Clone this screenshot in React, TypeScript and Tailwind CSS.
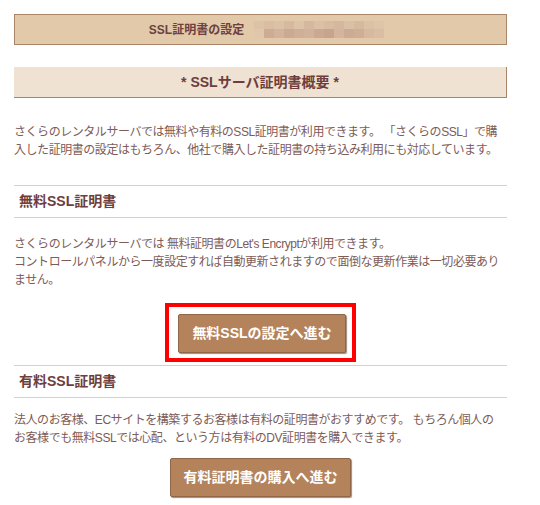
import { FC } from "react";

const blurTop = [
  "#dcc3a8", "#d9bea3", "#dbc1a6", "#d6b9a0", "#ddc4a9", "#d5b89f", "#dbc0a5",
  "#d8bca2", "#d4b79e", "#dac0a5", "#d6baa0", "#dbc2a7", "#ddc5aa",
];
const blurBottom = [
  "#e0c6ab", "#cdac95", "#d2b39b", "#cba993", "#cfaf97", "#d1b29a", "#caa891",
  "#c7a48d", "#d3b49c", "#ccab94", "#cfae96", "#d6b9a0", "#d9bea4",
];

const Section: FC<{ title: string }> = ({ title }) => (
  <div className="border-t border-b border-[#e3cdb5] h-[33px] flex items-center pl-[5px]">
    <h3 className="text-[14px] font-bold text-[#6e3e3c]">{title}</h3>
  </div>
);

const App: FC = () => {
  return (
    <div
      className="w-[540px] h-[505px] bg-white overflow-hidden"
      style={{ fontFamily: '"Liberation Sans", "Noto Sans CJK JP", sans-serif' }}
    >
      <div className="ml-[14px] w-[493px] pt-[14px] text-[#7d5b57]">
        <div className="h-[31px] bg-[#e2c9aa] border border-[#a9856a] flex items-center justify-center gap-[10px] pl-[12px]">
          <span className="text-[12px] font-bold text-[#6e4040]">SSL証明書の設定</span>
          <div className="flex flex-col">
            <div className="flex">
              {blurTop.map((c, i) => (
                <div key={i} className="w-[10px] h-[8px]" style={{ background: c }} />
              ))}
            </div>
            <div className="flex">
              {blurBottom.map((c, i) => (
                <div key={i} className="w-[10px] h-[9px]" style={{ background: c }} />
              ))}
            </div>
          </div>
        </div>

        <div className="mt-[22px] h-[31px] bg-[#f0e2d3] border-r border-b border-[#a9856a] flex items-center justify-center">
          <span className="text-[14px] font-bold text-[#6e3e3c]">* SSLサーバ証明書概要 *</span>
        </div>

        <p className="mt-[25px] text-[12px] leading-[18px] whitespace-nowrap tracking-[-0.45px]">
          さくらのレンタルサーバでは無料や有料のSSL証明書が利用できます。 「さくらのSSL」で購
          <br />
          入した証明書の設定はもちろん、他社で購入した証明書の持ち込み利用にも対応しています。
        </p>

        <div className="mt-[26px]">
          <Section title="無料SSL証明書" />
        </div>

        <p className="mt-[17px] text-[12px] leading-[18px] whitespace-nowrap tracking-[-0.45px]">
          さくらのレンタルサーバでは 無料証明書のLet's Encryptが利用できます。
          <br />
          コントロールパネルから一度設定すれば自動更新されますので面倒な更新作業は一切必要あり
          <br />
          ません。
        </p>

        <div className="mt-[14px] flex justify-center">
          <div className="border-[4px] border-[#ff0000] pt-[7px] pb-[5px] pl-[9px] pr-[6px]">
            <button className="w-[168px] h-[39px] bg-[#b5835b] border border-[#8f6647] rounded-[2px] shadow-[1px_1px_1px_rgba(90,60,40,0.6)] text-white text-[14px] font-bold">
              無料SSLの設定へ進む
            </button>
          </div>
        </div>

        <div className="mt-[3px]">
          <Section title="有料SSL証明書" />
        </div>

        <p className="mt-[13px] text-[12px] leading-[18px] whitespace-nowrap tracking-[-0.45px]">
          法人のお客様、ECサイトを構築するお客様は有料の証明書がおすすめです。 もちろん個人の
          <br />
          お客様でも無料SSLでは心配、という方は有料のDV証明書を購入できます。
        </p>

        <div className="mt-[11px] flex justify-center">
          <button className="w-[181px] h-[39px] bg-[#b5835b] border border-[#8f6647] rounded-[2px] shadow-[1px_1px_1px_rgba(90,60,40,0.6)] text-white text-[14px] font-bold">
            有料証明書の購入へ進む
          </button>
        </div>
      </div>
    </div>
  );
};

export default App;
